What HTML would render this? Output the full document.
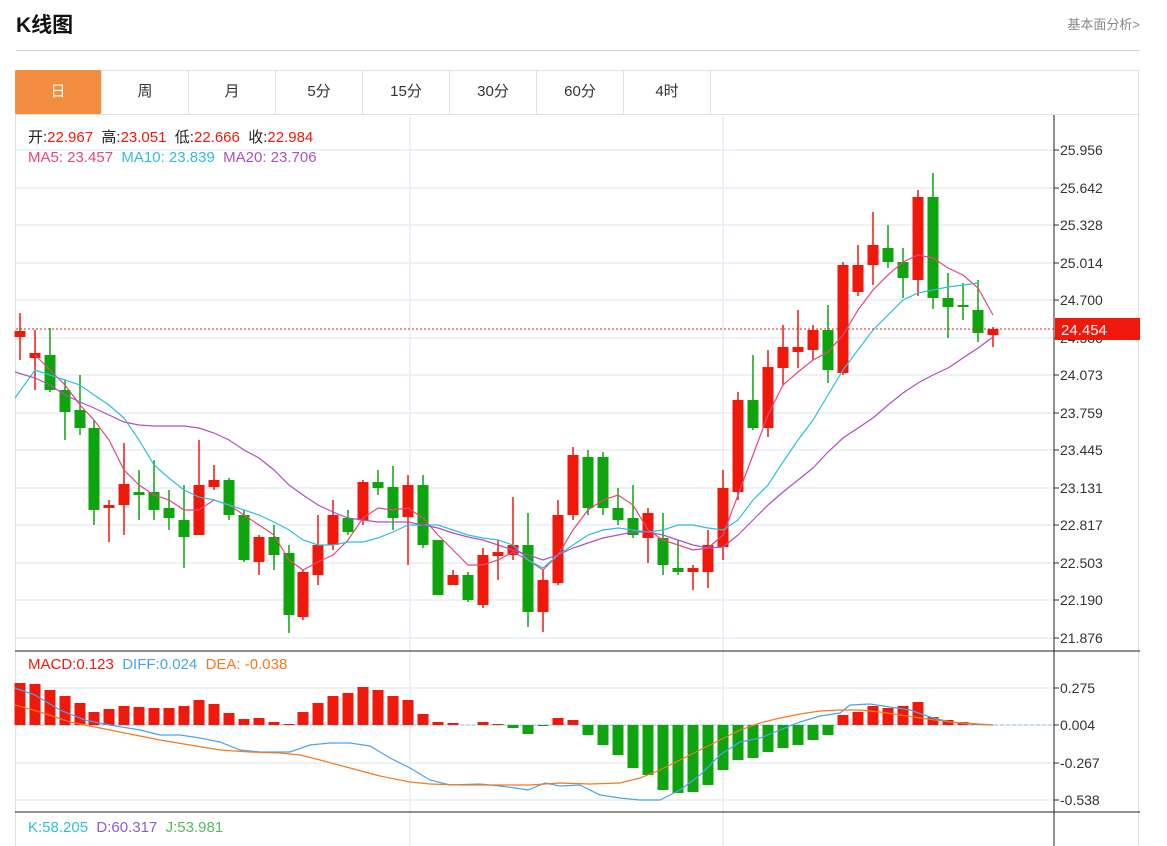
<!DOCTYPE html>
<html><head><meta charset="utf-8"><style>
html,body{margin:0;background:#fff;font-family:"Liberation Sans","Noto Sans CJK SC",sans-serif;width:1167px;height:846px;overflow:hidden;position:relative}
.t{position:absolute;left:16px;top:9px;font-size:21px;font-weight:bold;color:#111}
.r{position:absolute;right:27px;top:14px;font-size:13px;color:#888}
.hl{position:absolute;left:16px;top:50px;width:1124px;height:1px;background:#d0d0d0}
.box{position:absolute;left:15px;top:70px;width:1124px;height:776px;border:1px solid #e0e0e0;border-bottom:none;box-sizing:border-box}
.tabs{position:absolute;left:15px;top:70px;height:44px;display:flex;border-bottom:1px solid #e0e0e0;width:1125px}
.tabs div{width:87px;height:44px;line-height:44px;text-align:center;font-size:15px;color:#333;border-right:1px solid #e0e0e0;box-sizing:border-box}
.tabs div.a{background:#f28c3e;color:#fff;border-radius:2px}
svg{position:absolute;left:0;top:0}
.lg{position:absolute;font-size:15px;white-space:pre}
</style></head><body>
<div class="t">K线图</div><div class="r">基本面分析&gt;</div><div class="hl"></div>
<div class="box"></div>
<div class="tabs"><div class="a">日</div><div>周</div><div>月</div><div>5分</div><div>15分</div><div>30分</div><div>60分</div><div>4时</div></div>
<svg id="s" width="1167" height="846"></svg>
<div class="lg" style="left:28px;top:126px;color:#222">开:<span style="color:#f01a0a">22.967</span>  高:<span style="color:#f01a0a">23.051</span>  低:<span style="color:#f01a0a">22.666</span>  收:<span style="color:#f01a0a">22.984</span></div>
<div class="lg" style="left:28px;top:149px;color:#e8467c">MA5: 23.457  <span style="color:#2ec0d8">MA10: 23.839</span>  <span style="color:#b050c0">MA20: 23.706</span></div>
<div class="lg" style="left:28px;top:656px;color:#f01a0a">MACD:0.123  <span style="color:#4aa3f0">DIFF:0.024</span>  <span style="color:#f5791f">DEA: -0.038</span></div>
<div class="lg" style="left:28px;top:819px;color:#2ec0d8">K:58.205  <span style="color:#8a5cd0">D:60.317</span>  <span style="color:#5cb85c">J:53.981</span></div>
<script>
const C=[[20,331,337,313,360,1],[35,353,358,330,390,1],[50,355,390,328,392,0],[65,390,412,380,440,0],[80,410,428,375,435,0],[94,428,510,420,525,0],[109,505,508,500,542,1],[124,484,505,443,535,1],[139,492,495,470,520,0],[154,492,510,460,520,0],[169,508,518,490,530,0],[184,520,537,485,568,0],[199,485,535,440,535,1],[214,480,487,465,490,1],[229,480,515,478,520,0],[244,515,560,510,562,0],[259,537,562,535,575,1],[274,537,555,525,570,0],[289,553,615,545,633,0],[303,572,617,570,620,1],[318,545,575,515,585,1],[333,515,545,500,550,1],[348,518,532,510,535,0],[363,482,520,480,525,1],[378,482,488,470,495,0],[393,487,518,466,530,0],[408,485,517,475,565,1],[423,485,545,475,548,0],[438,540,595,540,585,0],[453,575,585,570,585,1],[468,575,600,572,602,0],[483,555,605,548,608,1],[498,552,556,540,580,1],[513,545,555,497,560,1],[528,545,612,513,627,0],[543,580,612,570,632,1],[558,515,583,500,585,1],[573,455,515,447,520,1],[588,457,508,450,515,0],[603,457,508,452,515,0],[618,508,520,488,525,0],[633,518,535,485,538,0],[648,513,538,508,563,1],[663,538,565,513,575,0],[678,568,572,540,575,0],[693,568,572,565,590,1],[708,545,572,530,588,1],[723,488,547,470,560,1],[738,400,492,392,500,1],[753,400,428,355,430,0],[768,367,428,350,437,1],[783,347,368,325,385,1],[798,347,352,310,368,1],[813,330,350,325,360,1],[828,330,370,305,383,0],[843,265,373,262,375,1],[858,265,292,245,296,1],[873,245,265,212,285,1],[888,248,262,225,268,0],[903,262,278,248,298,0],[918,197,280,190,296,1],[933,197,298,173,309,0],[948,298,307,273,338,0],[963,305,307,283,320,0],[978,310,333,280,342,0],[993,329,335,327,347,1]];
const M=[683,684,690,696,703,712,709,706,707,708,708,706,700,704,713,719,718,722,724,712,703,696,693,687,690,696,700,714,722,723,725,722,724,728,734,726,718,720,735,745,755,768,775,790,793,792,785,770,760,758,752,748,745,740,735,715,712,706,708,706,702,717,720,722,724,725];
const ma5="35,355 50,370 65,385 80,405 94,420 109,440 124,470 139,485 154,495 169,500 184,510 199,510 214,500 229,505 244,515 259,525 274,535 289,560 303,570 318,562 333,555 348,540 363,518 378,508 393,510 408,508 423,518 438,535 453,550 468,565 483,565 498,560 513,552 528,560 543,570 558,555 573,530 588,510 603,500 618,495 633,505 648,530 663,540 678,545 693,550 708,548 723,535 738,495 753,455 768,415 783,385 798,372 813,360 828,352 843,335 858,310 873,290 888,275 903,262 918,255 933,258 948,268 963,275 978,288 993,315";
const ma10="15,398 35,370 50,375 65,380 80,385 94,395 109,405 124,418 139,440 154,465 169,478 184,490 199,497 214,500 229,505 244,510 259,515 274,522 289,530 303,540 318,545 333,545 348,542 363,542 378,538 393,532 408,525 423,525 438,525 453,530 468,535 483,538 498,540 513,545 528,560 543,568 558,555 573,545 588,535 603,530 618,528 633,530 648,532 663,530 678,525 693,525 708,528 723,530 738,520 753,500 768,485 783,462 798,440 813,420 828,395 843,370 858,350 873,330 888,315 903,300 918,293 933,290 948,287 963,285 978,283";
const ma20="15,372 35,378 50,385 65,395 80,402 94,408 109,415 124,422 139,425 154,426 169,426 184,426 199,428 214,433 229,440 244,450 259,458 274,470 289,485 303,495 318,505 333,512 348,518 363,520 378,522 393,522 408,522 423,525 438,528 453,533 468,537 483,540 498,545 513,550 528,555 543,560 558,555 573,548 588,543 603,538 618,535 633,532 648,532 663,535 678,540 693,545 708,548 723,547 738,535 753,520 768,505 783,492 798,480 813,468 828,452 843,438 858,428 873,418 888,405 903,393 918,383 933,375 948,368 963,358 978,348 993,337";
const dif="15,688 35,695 60,710 85,720 110,725 140,730 160,735 180,735 200,738 220,742 240,750 260,752 290,752 310,745 330,743 350,743 370,746 390,758 410,768 430,780 450,785 480,784 500,786 515,788 528,790 545,783 560,786 580,785 600,795 620,798 640,800 660,800 680,790 700,775 720,755 740,742 760,738 780,730 800,722 820,716 840,713 850,705 870,704 890,707 910,710 930,717 950,722 970,724 993,725";
const dea="15,705 40,712 70,722 100,728 130,734 160,740 190,745 220,750 250,752 280,753 300,755 320,760 350,768 380,776 410,782 430,784 460,785 500,785 530,785 560,783 590,784 620,783 640,778 660,770 680,760 700,750 720,740 740,730 760,723 780,718 800,714 820,711 840,710 860,710 880,712 900,715 920,718 950,722 993,725";
let h='';
const G='#e6eef5';
const pl=[[150,'25.956'],[188,'25.642'],[225,'25.328'],[263,'25.014'],[300,'24.700'],[338,'24.386'],[375,'24.073'],[413,'23.759'],[450,'23.445'],[488,'23.131'],[525,'22.817'],[563,'22.503'],[600,'22.190'],[638,'21.876']];
pl.forEach(p=>{h+=`<line x1="16" y1="${p[0]}" x2="1054" y2="${p[0]}" stroke="${G}" stroke-width="1.5"/><line x1="1054" y1="${p[0]}" x2="1059" y2="${p[0]}" stroke="#333"/><text x="1060" y="${p[0]+5}" font-size="14" fill="#333" font-family="Liberation Sans">${p[1]}</text>`});
[[688,'0.275'],[725,'0.004'],[763,'-0.267'],[800,'-0.538']].forEach(p=>{h+=`<line x1="16" y1="${p[0]}" x2="1054" y2="${p[0]}" stroke="${G}" stroke-width="1.5"/><line x1="1054" y1="${p[0]}" x2="1059" y2="${p[0]}" stroke="#333"/><text x="1060" y="${p[0]+5}" font-size="14" fill="#333" font-family="Liberation Sans">${p[1]}</text>`});
h+=`<line x1="16" y1="725" x2="1054" y2="725" stroke="#9cc8e8" stroke-dasharray="4,2"/>`;
[410,723].forEach(x=>h+=`<line x1="${x}" y1="115" x2="${x}" y2="846" stroke="${G}" stroke-width="1.5"/>`);
h+=`<line x1="15" y1="651" x2="1140" y2="651" stroke="#222"/><line x1="15" y1="812" x2="1140" y2="812" stroke="#222"/><line x1="1054" y1="115" x2="1054" y2="846" stroke="#222"/>`;
C.forEach(c=>{const col=c[5]?'#f0180a':'#0ea40e';h+=`<line x1="${c[0]}" y1="${c[3]}" x2="${c[0]}" y2="${c[4]}" stroke="${col}" stroke-width="1.5"/><rect x="${c[0]-5.5}" y="${c[1]}" width="11" height="${Math.max(2,c[2]-c[1])}" fill="${col}"/>`});
M.forEach((m,i)=>{const x=C[i][0];if(m<725)h+=`<rect x="${x-5.5}" y="${m}" width="11" height="${725-m}" fill="#f0180a"/>`;else if(m>725)h+=`<rect x="${x-5.5}" y="725" width="11" height="${m-725}" fill="#0ea40e"/>`;});
h+=`<polyline points="${ma5}" fill="none" stroke="#e8467c" stroke-width="1.2"/><polyline points="${ma10}" fill="none" stroke="#2ec0d8" stroke-width="1.2"/><polyline points="${ma20}" fill="none" stroke="#b050c0" stroke-width="1.2"/>`;
h+=`<polyline points="${dif}" fill="none" stroke="#4aa3f0" stroke-width="1.2"/><polyline points="${dea}" fill="none" stroke="#f5791f" stroke-width="1.2"/>`;
h+=`<line x1="16" y1="329" x2="1054" y2="329" stroke="#e0241a" stroke-dasharray="2,2"/><rect x="1055" y="318" width="85" height="22" fill="#f0180a"/><text x="1061" y="335" font-size="15" fill="#fff" font-family="Liberation Sans">24.454</text>`;
document.getElementById('s').innerHTML=h;
</script>
</body></html>
